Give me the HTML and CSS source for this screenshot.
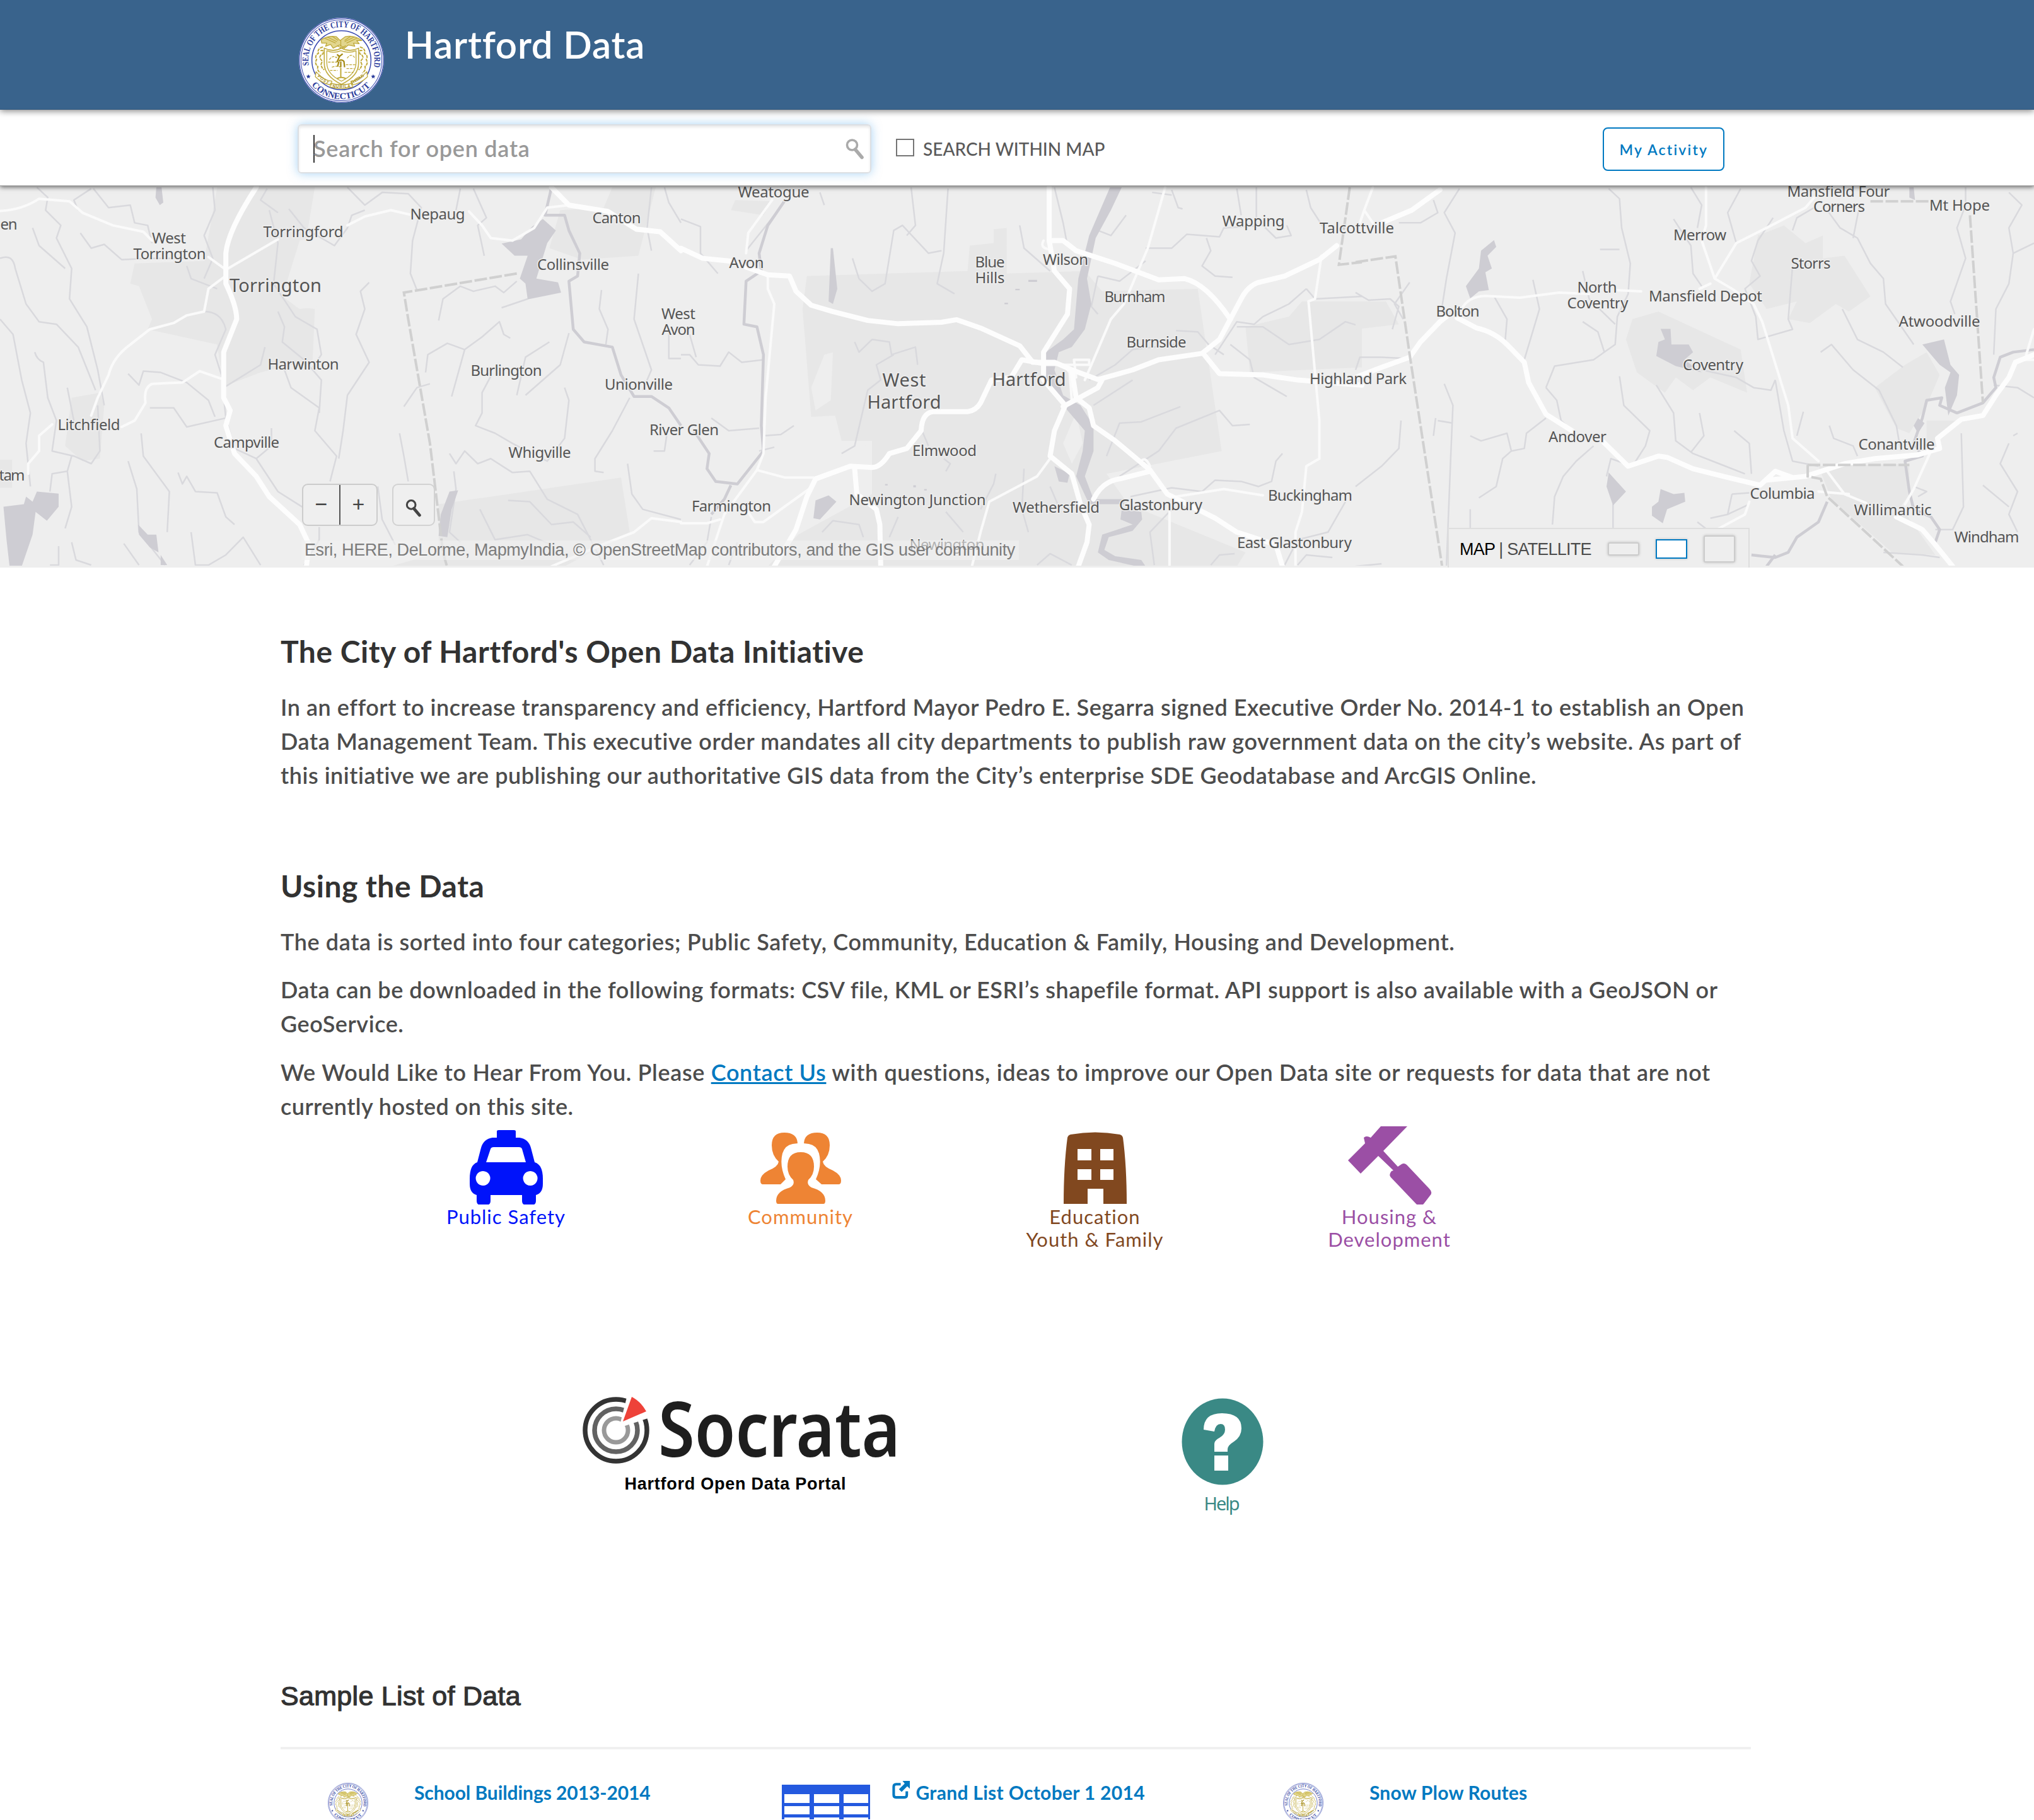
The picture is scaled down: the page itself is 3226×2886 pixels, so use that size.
FILE: index.html
```html
<!DOCTYPE html>
<html lang="en">
<head>
<meta charset="utf-8">
<title>Hartford Data</title>
<link rel="stylesheet" href="styles.css">
</head>
<body>
<svg class="defs" width="0" height="0" aria-hidden="true">
  <defs>
    <path id="arc-top" d="M15.8 76 A52 52 0 1 1 118.2 76"/>
    <path id="arc-bottom" d="M19.5 105.5 A61 61 0 0 0 114.5 105.5"/>
    <symbol id="seal" viewBox="0 0 134 134">
      <circle cx="67" cy="67" r="67" fill="#fff"/>
      <circle cx="67" cy="67" r="66.2" fill="none" stroke="#3a4ab0" stroke-width="1.2"/>
      <circle cx="67" cy="67" r="63.6" fill="none" stroke="#3a4ab0" stroke-width="1"/>
      <circle cx="67" cy="67" r="46.5" fill="none" stroke="#3a4ab0" stroke-width="1.5"/>
      <g fill="#2c3c9c" font-family="Liberation Serif, serif" font-weight="700" font-size="14">
        <text textLength="182" lengthAdjust="spacingAndGlyphs"><textPath href="#arc-top" startOffset="1" textLength="182" lengthAdjust="spacingAndGlyphs">SEAL OF THE CITY OF HARTFORD</textPath></text>
        <text textLength="105" lengthAdjust="spacingAndGlyphs"><textPath href="#arc-bottom" startOffset="1" textLength="105" lengthAdjust="spacingAndGlyphs">CONNECTICUT</textPath></text>
      </g>
      <path fill="#2c3c9c" d="M15 89l1 2.400 2.600.2-2 1.700.6 2.500-2.200-1.400-2.200 1.400.6-2.500-2-1.700 2.600-.2zM117 89l1 2.400 2.600.2-2 1.700.6 2.500-2.200-1.400-2.200 1.400.6-2.500-2-1.700 2.600-.2z"/>
      <g fill="none" stroke="#c0aa3c" stroke-width="1.300" stroke-linejoin="round">
        <path d="M35 35q10-7 24-5l6 6 8-6q14-3 26 6l-8 0 4 5-9-1 2 5-10-2-6 5-8-5-10 5-4-6-8 3 2-5-8 0z" fill="#e2d68e"/>
        <path d="M40 32l18 8M44 30l16 8M92 32l-17 8M88 30l-16 8M52 29l10 7M82 29l-10 7M66 36v10M60 44l12 6M74 44l-12 6"/>
        <path d="M40 48q14 7 27 0 13 7 27 0v24q0 20-27 33-27-13-27-33z" stroke-width="1.600"/>
        <path d="M44 52q11 5 22 0 13 5 24 0v19q0 18-23 29-23-11-23-29z"/>
        <path d="M48 66q6-8 11-3 3-5 7 0M76 64q6-9 12-1M46 70h14M74 74h15M52 78q8-3 14 0M75 80h12M72 86h14M49 83h12" stroke-dasharray="4 1.500"/>
        <path d="M60 70l4-9-4-3M64 61l5-4M63 68q5-3 8 1l1 9M63 69l-2 8M66 69v9" stroke="#a58a14" stroke-width="2.200"/>
        <path d="M66 79v16M60 96q7-4 14 0" stroke-width="2"/>
        <path d="M38 46q-10 3-7 10-7 4-3 10-4 6 2 11-2 6 4 10M34 52q6-2 4 5-7 3-4 8 4 3 1 8 0 6 5 9M96 46q10 3 7 10 7 4 3 10 4 6-2 11 2 6-4 10M100 52q-6-2-4 5 7 3 4 8-4 3-1 8 0 6-5 9" stroke-dasharray="5 1.200" stroke-width="2"/>
        <path d="M27 85q12 14 25 15l-1 6q-14-2-25-13zM107 85q-12 14-25 15l1 6q14-2 25-13zM50 103q17 5 34 0l1 6q-18 5-36 0z" fill="#fff"/>
      </g>
      <g fill="#a8901c" font-family="Liberation Sans, sans-serif" font-weight="700" font-size="6.500">
        <text x="53" y="110" textLength="28">NUBILA</text>
        <text transform="translate(29 93) rotate(36)" textLength="20">POST</text>
        <text transform="translate(84 105) rotate(-34)" textLength="23">PHŒBUS</text>
      </g>
    </symbol>
    <symbol id="loupe" viewBox="0 0 30 34">
      <circle cx="10.500" cy="11" r="8" fill="none" stroke="currentColor" stroke-width="3.600"/>
      <path d="M15.500 18l10.500 12.500" stroke="currentColor" stroke-width="5.600" stroke-linecap="round"/>
    </symbol>
  </defs>
</svg>

<header class="banner">
  <svg class="banner-logo"><use href="#seal"/></svg>
  <h1 class="banner-title">Hartford Data</h1>
</header>

<div class="searchbar">
  <div class="search-box">
    <span class="caret"></span>
    <span class="placeholder">Search for open data</span>
    <svg class="search-icon"><use href="#loupe"/></svg>
  </div>
  <label class="within"><span class="checkbox"></span>SEARCH WITHIN MAP</label>
  <a class="activity">My Activity</a>
</div>

<div class="map">
  <svg class="map-canvas" viewBox="0 0 3226 602">
    <!-- western third -->
    <g transform="translate(0 -14) scale(.6888 .402)">
      <g class="urban">
        <path d="M500 40H725L690 400 680 510 725 520 720 720 600 770 515 825 500 660 340 600 350 560 320 430 300 420 310 340 470 330z"/>
        <path d="M1410 40H1510L1470 310 1340 325 1265 280 1290 130 1390 120z"/>
        <path d="M165 870L230 850 240 900 230 1110 190 1120 150 1060z"/>
        <path d="M0 1115H28V1225H0z"/>
        <path d="M1010 1290L1430 1185 1450 1400 1300 1535H900L1010 1480z"/>
      </g>
      <g class="land"><path d="M690 250L735 230V510L690 520 650 470z"/></g>
      <g class="stream">
        <path d="M85 40L110 80 105 130 140 190 130 240 165 360 160 480 200 590 225 760 240 900"/>
        <path d="M75 200L90 270 150 360"/><path d="M0 320Q30 300 35 360L60 500 90 570 130 580 180 670 220 840"/>
        <path d="M0 560L30 620 50 800 70 930 60 1050 70 1220"/><path d="M80 690Q85 720 100 730L110 870 130 960 120 1080 170 1100 210 1130 230 1080 225 900"/>
        <path d="M210 45L170 90 180 130M215 45L250 120 300 110 310 180 340 190 350 260"/>
        <path d="M185 220L210 280 240 265 280 325 340 320 430 320"/><path d="M490 40L495 130 470 230 490 320 470 400"/>
        <path d="M430 350L440 400 500 440"/><path d="M620 130L640 260 630 420 680 550 730 600 740 700 720 750"/>
        <path d="M665 125L700 200 740 240 770 270 800 200 810 150 840 130"/><path d="M615 45L600 90 640 140"/>
        <path d="M640 530L655 590 650 650 700 720 740 800 735 930"/><path d="M655 760L670 830 735 910 725 1000 775 1100 760 1200"/>
        <path d="M850 415L830 450 840 520 820 620 850 730 800 860 790 1000 780 1110"/>
        <path d="M800 40L840 110 880 60 940 65 970 120 950 250 945 380 960 445"/>
        <path d="M1060 45L1050 130M1090 45L1120 160 1100 190 1115 310"/><path d="M610 670L600 740 520 825"/>
        <path d="M470 530Q510 530 520 600L495 700 510 780 520 950 430 985 400 910 345 910"/>
        <path d="M295 775L320 820 330 765 370 770 430 810 480 880 495 945"/>
        <path d="M520 950L540 1070 590 1110 640 1240 700 1305"/><path d="M590 1110L625 1060V990"/>
        <path d="M155 830L170 960M325 1010L330 1100 390 1240 385 1400"/><path d="M295 1120L315 1230 320 1400 380 1530"/>
        <path d="M410 1165L420 1210 430 1180 450 1240 500 1245 520 1340 540 1370"/><path d="M165 1100L155 1160 120 1170 115 1240M155 1160L165 1300 150 1385"/>
        <path d="M135 1455V1530H115M165 1440L175 1510 210 1530M285 1445L320 1530M440 1400L450 1530 480 1530 520 1490 560 1420 600 1530"/>
        <path d="M735 1380V1430L700 1530M870 1220L880 1350 910 1450M920 1010L930 1100 940 1200M930 905L960 830 990 815"/>
        <path d="M1010 565L1020 480 1060 430 1090 450 1140 430 1160 455 1190 410M1155 515L1215 480"/>
        <path d="M980 770L985 700 1030 655 1070 680 1110 630 1150 570 1160 620 1175 635M1070 680L1040 865"/>
        <path d="M1310 615L1290 740 1210 860M1265 650L1210 710 1190 860"/><path d="M1130 785L1110 850 1110 930 1095 980 1140 1010 1180 1050 1260 1120 1300 1030 1310 880 1300 830"/>
        <path d="M1035 1090L1050 1130 1070 1080 1100 1130 1130 1110 1180 1165 1220 1160 1260 1270 1330 1330 1390 1530"/>
        <path d="M1170 1275L1220 1280 1270 1370 1320 1360 1360 1420M1105 1310L1140 1430 1215 1410 1270 1450"/>
        <path d="M1385 445L1380 520 1400 600 1395 660M1470 380L1460 560 1500 760 1480 840"/><path d="M1500 40L1490 200 1500 290M1530 40L1540 100 1568 180"/>
        <path d="M1450 870L1410 1000 1370 1110 1370 1160 1390 1165M1445 1130L1455 1250 1480 1310 1568 1350"/><path d="M1540 600V715H1568M1535 1020L1530 1080 1505 1080M1045 1160L1050 1230 1035 1400 1060 1440"/>
      </g>
      <g class="river">
        <path d="M1270 40L1255 150 1300 150 1310 210 1335 300 1330 390 1310 410 1320 600 1345 650 1410 670 1430 780 1460 865 1500 865 1540 910 1568 980"/>
      </g>
      <g class="water">
        <path d="M360 40H372L376 100 368 110 358 80zM1250 165L1280 210 1260 260 1235 400 1285 415 1292 455 1215 482 1210 420 1197 400 1215 310 1185 310 1155 262 1200 245 1225 195z"/>
        <path d="M85 1240L135 1248 135 1300 108 1355 82 1320 75 1410 50 1535H22L15 1430 8 1300 55 1290 60 1260 75 1280z"/>
        <path d="M318 1370L340 1410 360 1410 365 1480 345 1460 320 1410zM370 1490L385 1530H370zM1035 1240L1055 1235 1040 1310 1030 1420 1010 1415 1015 1330z"/>
      </g>
      <g class="road-thin">
        <path d="M0 133Q50 130 90 85L160 95 190 140 260 190 330 215 350 250"/><path d="M480 315L520 365 640 245"/>
        <path d="M515 395L480 440 470 530 430 545 400 575 345 600 300 660Q260 710 250 780L225 870 210 940"/>
        <path d="M510 795L460 765 420 810 350 815Q330 830 335 890L310 960 280 985"/><path d="M120 975L90 1020V1080L65 1130V1170"/>
        <path d="M800 190L840 155 900 130 950 150M1080 135L1110 190 1130 240 1180 250 1230 200 1260 120 1310 110 1390 130"/>
        <path d="M1270 1535L1400 1440 1460 1400 1500 1345 1568 1360"/>
      </g>
      <g class="road">
        <path d="M590 40Q525 210 520 300V420Q545 510 545 560L515 690V870L530 920 520 980 540 1090 590 1180 620 1260 690 1370 712 1450 705 1540"/>
        <path d="M1270 40L1310 110 1400 135 1465 205 1520 215 1568 290"/>
      </g>
      <path class="border" d="M1190 380L930 455 940 560 990 1050 1020 1480 1030 1540"/>
    </g>
    <!-- central third -->
    <g transform="translate(1080 -14) scale(.6888 .402)">
      <g class="urban">
        <path d="M290 390L660 370 665 270 720 260V205L750 200V380L930 370 970 450 1190 440 1245 1080 980 1170 1030 1290 1300 1480 1280 1535H200L270 1410 440 1250V1040L370 1040 355 940 300 945 280 520z"/>
        <path d="M125 90L210 95 190 150 115 130zM1300 590L1400 550 1430 490H1568V750L1310 770z"/>
      </g>
      <g class="land"><path d="M330 700L350 690 345 880 310 920 300 830zM370 1100L435 1050V1240L330 1270zM910 930L925 1050 900 1130 880 1050z"/></g>
      <g class="stream">
        <path d="M0 165L45 195V300L85 380M240 90L220 140 150 290M320 60L330 110M530 40L540 190 520 230M615 45L605 300 590 420 630 460"/>
        <path d="M395 320L410 400 440 450 470 420 490 210 510 190 570 300 600 290M780 190L790 280 850 370"/>
        <path d="M400 650L410 690 440 640 480 650 485 700 540 670 545 740M490 700L450 740 460 800 430 840 415 950 400 1060 370 1090"/>
        <path d="M0 700H20L40 740 90 745 110 690 140 730 190 720M20 620L35 710M70 950L110 1000 180 990M190 1020L230 1015 260 980M215 1065L180 1080"/>
        <path d="M860 40L880 180 890 270 920 300M1025 150L990 230 960 210M1130 50L1145 120 1155 125M1085 60L1130 70"/>
        <path d="M1070 280L1130 280 1165 225 1240 235 1250 200 1340 190 1370 240 1405 230 1395 190M1210 240L1220 290 1200 350 1230 390 1270 395"/>
        <path d="M960 390L1010 410 1070 330M960 390L945 510 960 540M1440 440L1400 500 1340 550 1320 580 1280 570 1230 700M1440 440L1460 480 1568 470"/>
        <path d="M1280 590L1340 590 1400 660 1470 640 1530 570 1568 590M1140 605L1190 610 1215 660 1250 700M940 800L1000 740 1040 680 1140 660M1265 660L1310 720 1320 790 1395 865"/>
        <path d="M980 1100L1010 970 1060 965 1150 905M1010 1180L1100 1080 1140 990 1240 920 1270 980 1310 975M1040 800L950 900M1280 45L1290 150M1440 50L1450 120 1480 200M1325 40V190"/>
        <path d="M555 1000L570 1060M725 1170L720 1210 690 1310M790 1150L785 1310 800 1400M850 1220L870 1300M325 1400L350 1355 410 1370 420 1420M605 1110L620 1130 610 1160M610 1320L650 1400M500 1340L480 1420"/>
        <path d="M1035 1260L1130 1225 1200 1240 1230 1195 1290 1200 1330 1220 1360 1200 1370 1120 1385 1090M1530 1280L1490 1400 1420 1430 1390 1530M1130 1310L1080 1400 1090 1530M1220 1530L1240 1490 1275 1485M820 1530L850 1485 900 1530M130 1440L110 1530M70 1340L60 1440 20 1530M1500 1500L1440 1490 1420 1530"/>
      </g>
      <g class="river">
        <path d="M240 90L200 190 180 300 185 370 150 410 145 580 175 590 190 700 185 980 190 1080 130 1210 80 1200 60 1150 65 1090 30 1000"/>
        <path d="M115 1215L100 1270 70 1330"/>
      </g>
      <g class="water">
        <path d="M988 40H1015L990 130 955 240 935 400 945 500 930 600 900 670 870 690 860 760 880 860 920 900 950 980V1080L930 1180 950 1270H1020V1290H940L910 1180 925 1080 930 1000 890 920 840 800V690L880 640 905 600 915 400 940 230z"/>
        <path d="M345 280H350L360 440 350 500 340 490zM340 1255L358 1280 320 1350 305 1345 310 1275zM860 1140L895 1170 890 1205 870 1200zM1015 1310L1060 1320 1062 1350 1040 1395 985 1420 975 1470 1000 1495 1060 1510 1070 1535H1050L985 1510 960 1480 970 1410 1040 1370 1012 1350zM470 1210h6v6h-6zM535 1215h6v8h-6zM770 440h10v6h-10zM800 405h20v8h-20zM560 1230h6v6h-6zM745 495h8v6h-8z"/>
      </g>
      <g class="road-thin">
        <path d="M210 90L155 220 150 300M200 390V440L215 500 195 870 190 1090 175 1155 100 1330 60 1535"/>
        <path d="M1115 40L1075 280 1050 380 1020 500 990 560 950 720 930 800M1475 310L1460 480 1445 490 1470 960V1110L1440 1140 1430 1320 1415 1400V1535"/>
        <path d="M175 1155L240 1185H305M150 1310L170 1360H190L295 1230M0 1365H60L90 1350M905 720H940V740H840M905 720L910 790M1140 1260L1250 1230 1340 1255M1125 1320V1535"/>
        <path d="M850 1110L820 1180 710 1280 690 1400 670 1535M900 880L895 770 880 740M835 250Q825 280 850 285M1060 1120Q1070 1100 1080 1140"/>
      </g>
      <g class="road">
        <path d="M0 280L50 320 110 330 200 385 250 390 265 450 300 505 350 530 430 565 500 578 600 572 635 562 690 595 780 665 810 730H860L900 760 960 798 1040 760 1100 720 1200 695 1240 640 1265 560 1290 480Q1305 430 1330 415L1390 390 1470 325 1510 270"/>
        <path d="M848 40V250H880L910 290 1000 340 1100 405 1160 400Q1210 420 1265 560M1205 700L1240 775 1340 780 1420 800 1568 820"/>
        <path d="M848 250L860 370 895 440 890 540 835 690V800L885 900 860 1000 850 1100 900 1170 920 1290 940 1370 935 1440 915 1535"/>
        <path d="M835 735L785 720 760 790 715 800 690 890Q680 920 660 925H580Q555 930 553 1000L520 1070 480 1090Q460 1145 440 1145L390 1140 310 1190 290 1260 265 1390 215 1535"/>
        <path d="M900 760L910 870 940 910 950 980 1000 1040 1080 1155 1120 1250 1230 1345 1280 1400 1370 1450 1385 1535M970 798L960 830 880 905M950 1270Q970 1200 1010 1190L1080 1160M400 1150L405 1250 450 1310 458 1370 460 1535"/>
      </g>
      <path class="border" d="M1540 40L1515 345 1568 335"/>
    </g>
    <!-- eastern third -->
    <g transform="translate(2150 -14) scale(.6862 .402)">
      <g class="urban">
        <path d="M930 230L990 190 1040 260 1080 230 1080 320 1130 310 1190 470 1140 530 1110 500 1050 575 1000 560 1020 490 950 520 910 420z"/>
        <path d="M640 560L700 530 890 680 905 850 820 790 780 840 740 790 715 850 650 770 625 640zM1270 740L1320 690 1350 780 1320 900 1280 1010 1250 990 1200 830zM1070 1140L1280 1130V1250L1260 1300 1340 1490 1240 1480 1100 1270zM1320 960H1400L1320 1060z"/>
        <path d="M0 490H70L100 580 0 600z"/>
      </g>
      <g class="stream">
        <path d="M240 45L205 140 230 220 210 400 200 510 210 540M180 90L190 140 150 180 100 180M0 455L30 485 80 480 100 510 85 600M110 560L90 500 125 415M410 405L425 520 390 720"/>
        <path d="M585 45L610 85 615 200 635 340 630 460 605 550 600 660 550 720 460 745 440 830M565 285L610 285M525 370L540 480 600 580M525 570L560 610 575 690M320 470L350 560 345 660"/>
        <path d="M735 165L775 270 780 380 800 430M775 40L800 110 790 200M890 45L860 140 880 260M965 160L930 250 915 330 935 390 900 440 925 550 930 640 1010 600 1000 560 1010 350M1010 210L1020 160 1060 120"/>
        <path d="M1090 130L1120 200 1160 240 1190 340 1220 400 1225 500 1290 660M1165 110L1150 240M1410 40V110L1390 200 1410 320 1375 490 1385 540M1125 520L1160 640 1220 690 1265 750M1075 690L1100 660 1150 760 1210 840 1250 980 1260 1080"/>
        <path d="M1510 60L1540 110 1510 200 1520 300 1510 420 1480 520 1475 700M1568 260L1520 300"/><path d="M0 760L10 710 60 710 120 715"/>
        <path d="M105 960L100 1070 60 1140 0 1220M205 815L225 900 220 1100 210 1535M185 950L180 1020M225 970L190 960M265 1020L290 1040 350 1010 360 1080 340 1110 325 1220 285 1265M360 1080L390 1070 395 1010 440 950"/>
        <path d="M440 830L465 880 475 960 500 1000M550 1060L510 1120 480 1180 460 1260 455 1370M610 785L620 900 680 1000 670 1060 640 1140M695 820L735 930 740 1040 780 1090 840 1130 900 1170M795 930L805 1020 775 1085"/>
        <path d="M640 1140L590 1110 580 1180M595 1290V1390M265 1310V1400M875 1000L910 1050 915 1170M1035 925L1020 1020M1095 980L1105 1030 1150 1060 1160 1100M970 800L960 840 920 830 880 790 800 760M970 800L990 1000 1010 1120 1070 1140"/>
        <path d="M1400 1010L1405 1300 1380 1390 1340 1390M1510 1050L1490 1130 1530 1240 1510 1330 1530 1400M1450 1215L1510 1300M1290 1220L1320 1240 1300 1260M1475 820L1530 830 1568 870M1520 1020L1530 1010M870 1250L860 1330 820 1345M790 1360L820 1400"/>
        <path d="M1220 1480L1310 1490 1350 1500M0 1535L60 1525M860 1330L910 1290M910 1245L870 1250"/>
      </g>
      <g class="river">
        <path d="M1568 680L1520 690 1490 710 1475 790 1480 830 1450 890 1390 930 1350 900 1355 870 1320 880 1310 950 1290 1050 1310 1100 1270 1120 1280 1240 1290 1310 1330 1340 1350 1390 1340 1440"/>
        <path d="M1090 1280L1070 1360 1020 1420 1000 1480 970 1500 915 1490M970 1490L950 1535"/>
      </g>
      <g class="water">
        <path d="M320 248L325 275 305 310 315 360 300 375 308 445 285 450 265 478 255 430 285 360 290 290zM705 598H728L730 660 770 660 780 690 760 720 780 745 800 770 740 745 695 705 700 650 715 640z"/>
        <path d="M585 1165L625 1240 595 1295 580 1220zM705 1230L735 1250 760 1245 762 1280 720 1310 710 1365 685 1335 685 1300 700 1280zM1310 660L1360 640 1375 740 1395 780 1390 860 1370 940 1362 830 1375 770 1350 740zM1280 40H1290L1293 90 1280 80zM1300 950L1315 970 1300 1010 1290 980z"/>
      </g>
      <g class="road-thin">
        <path d="M40 40L20 130 10 180M20 130L40 180M245 520Q260 470 300 468L380 475 470 455 540 460M600 445L660 450"/>
        <path d="M810 40V190L800 250 830 400 870 440 920 500 940 570 1000 900 1010 1030 1070 1120M830 400L880 260 950 200 1040 120 1060 80M820 420L795 440"/>
        <path d="M1070 1240L1140 1250M1090 1160L1130 1250 1180 1285M910 1280L900 1330 835 1390M1330 1080L1290 1230 1270 1290M1545 720H1568M1550 700L1568 600"/>
      </g>
      <g class="road">
        <path d="M0 790L60 750 125 710 150 650 195 570 210 550M195 50L130 130 60 180M235 555L280 595Q320 610 350 660L390 730 400 810 440 935 500 1000M570 1040L630 1140 700 1100 720 1105 780 1150 850 1180 935 1215 970 1160 1010 1185M950 1195L1040 1180 1130 1130 1200 1110 1300 1095 1350 1070 1345 1030 1400 955 1450 940 1480 860 1510 790 1525 730 1568 700M1250 1340L1310 1390 1340 1450 1380 1535"/>
      </g>
      <path class="border" d="M0 335L92 312 125 700 200 1535M1190 95H1330M1420 150L1450 890M1045 1135H1280M1045 1135V1180L1075 1190 1090 1260 1265 1535"/>
    </g>

    <g class="labels" transform="translate(0 -293)">
      <text x="14" y="362" textLength="27">en</text><text x="19" y="760" textLength="41">tam</text>
      <text x="268" y="384" textLength="54">West</text><text x="269" y="409" textLength="115">Torrington</text>
      <text x="481" y="374" textLength="127">Torringford</text><text x="694" y="346" textLength="87">Nepaug</text>
      <text x="978" y="352" textLength="77">Canton</text><text x="909" y="426" textLength="114">Collinsville</text>
      <text x="1076" y="504" textLength="54">West</text><text x="1076" y="529" textLength="53">Avon</text>
      <text x="481" y="584" textLength="113">Harwinton</text><text x="803" y="594" textLength="113">Burlington</text>
      <text x="1013" y="616" textLength="108">Unionville</text><text x="1085" y="688" textLength="110">River Glen</text>
      <text x="141" y="680" textLength="99">Litchfield</text><text x="391" y="708" textLength="104">Campville</text>
      <text x="856" y="724" textLength="99">Whigville</text><text x="1227" y="311" textLength="113">Weatogue</text>
      <text x="1184" y="423" textLength="55">Avon</text><text x="1570" y="422" textLength="47">Blue</text>
      <text x="1570" y="447" textLength="47">Hills</text><text x="1690" y="418" textLength="72">Wilson</text>
      <text x="1988" y="357" textLength="99">Wapping</text><text x="2152" y="368" textLength="118">Talcottville</text>
      <text x="1800" y="477" textLength="97">Burnham</text><text x="1834" y="549" textLength="95">Burnside</text>
      <text x="2154" y="607" textLength="154">Highland Park</text><text x="1498" y="721" textLength="102">Elmwood</text>
      <text x="1455" y="799" textLength="217">Newington Junction</text><text x="1160" y="809" textLength="126">Farmington</text>
      <text x="1675" y="811" textLength="138">Wethersfield</text><text x="1841" y="807" textLength="132">Glastonbury</text>
      <text x="2078" y="792" textLength="134">Buckingham</text><text x="2053" y="867" textLength="182">East Glastonbury</text>
      <text x="1502" y="870" textLength="119">Newington</text><text x="2916" y="310" textLength="163">Mansfield Four</text>
      <text x="2917" y="334" textLength="82">Corners</text><text x="3108" y="332" textLength="96">Mt Hope</text>
      <text x="2696" y="379" textLength="84">Merrow</text><text x="2872" y="424" textLength="63">Storrs</text>
      <text x="2533" y="462" textLength="63">North</text><text x="2534" y="487" textLength="97">Coventry</text>
      <text x="2705" y="476" textLength="180">Mansfield Depot</text><text x="2312" y="500" textLength="69">Bolton</text>
      <text x="3076" y="516" textLength="129">Atwoodville</text><text x="2717" y="585" textLength="96">Coventry</text>
      <text x="2502" y="699" textLength="92">Andover</text><text x="3008" y="711" textLength="121">Conantville</text>
      <text x="2827" y="789" textLength="103">Columbia</text><text x="3002" y="815" textLength="123">Willimantic</text>
      <text x="3151" y="858" textLength="103">Windham</text>
      <g class="city">
        <text x="437" y="461" textLength="146">Torrington</text><text x="1434" y="611" textLength="69">West</text>
        <text x="1434" y="646" textLength="117">Hartford</text><text x="1632" y="610" textLength="117">Hartford</text>
      </g>
    </g>
  </svg>
  <div class="zoom"><span>−</span><span>+</span></div>
  <div class="map-search"><svg><use href="#loupe"/></svg></div>
  <div class="attribution">Esri, HERE, DeLorme, MapmyIndia, © OpenStreetMap contributors, and the GIS user community</div>
  <div class="basemap">
    <span class="basemap-names"><b>MAP</b> | SATELLITE</span>
    <i class="size size-s"></i><i class="size size-m"></i><i class="size size-l"></i>
  </div>
</div>

<main class="content">
  <h2>The City of Hartford's Open Data Initiative</h2>
  <p class="tight">In an effort to increase transparency and efficiency, Hartford Mayor Pedro E. Segarra signed Executive Order No. 2014-1 to establish an Open<br><span class="loose">Data Management Team. This executive order mandates all city departments to publish raw government data on the city’s website. As part of</span><br>this initiative we are publishing our authoritative GIS data from the City’s enterprise SDE Geodatabase and ArcGIS Online.</p>

  <h2 class="using">Using the Data</h2>
  <p>The data is sorted into four categories; Public Safety, Community, Education &amp; Family, Housing and Development.</p>
  <p class="tight">Data can be downloaded in the following formats: CSV file, KML or ESRI’s shapefile format. API support is also available with a GeoJSON or<br>GeoService.</p>
  <p class="contact"><span class="loose">We Would Like to Hear From You. Please <a>Contact Us</a> with questions, ideas to improve our Open Data site or requests for data that are not</span><br>currently hosted on this site.</p>

  <div class="categories">
    <a class="cat safety">
      <svg viewBox="0 0 118 124"><path fill-rule="evenodd" d="M44 8q0-2 3-2h24q3 0 3 2v10h6q14 2 18 16l6 23q13 4 13 26v8q0 15-11 18v9q0 7-7 7h-8q-7 0-7-7v-9H34v9q0 7-7 7h-8q-7 0-7-7v-9Q1 106 1 91v-8q0-22 12-26l6-23q4-14 18-16h7zM39 33q-4 0-5 3l-7 21h63l-6-21q-1-3-5-3zM22 71a11.500 11.500 0 1 0 .1 0zM97 71a11.500 11.500 0 1 0 .1 0z"/></svg>
      <span>Public Safety</span>
    </a>
    <a class="cat community">
      <svg viewBox="0 0 132 124"><path d="M40 10q-20 0-20 20 0 16 11 26-1 8-16 14Q2 77 2 86q0 6 4 6h28l8-8Q32 62 37 43q4-13 16-15l8-1Q60 10 40 10zM92 10q20 0 20 20 0 16-11 26 1 8 16 14 13 7 13 16 0 6-4 6H99l-9-8q10-22 5-41-4-13-16-15l-8-1Q72 10 92 10z"/><path d="M66 41q21 0 21 23 0 13-9 21-3 8 5 12 22 6 22 21 0 5-3 5H30q-3 0-3-5 0-15 22-21 8-4 5-12-9-8-9-21 0-23 21-23z"/></svg>
      <span>Community</span>
    </a>
    <a class="cat education">
      <svg viewBox="0 0 102 124"><path fill-rule="evenodd" d="M1 123q0-60 6-105 1-4 5-5 39-7 78 0 4 1 5 5 6 45 6 105H64V99H39v24zM23 36v18h22V36zM59 36v18h21V36zM23 68v17h22V68zM59 68v17h21V68z"/></svg>
      <span>Education<br>Youth &amp; Family</span>
    </a>
    <a class="cat housing">
      <svg viewBox="0 0 134 124"><path d="M53 0H95L57 39l23 25 6-4q5-3 10 3l34 36q6 6 1 11l-10 13q-6 6-12 0L69 81q-4-4 1-10l3-1-24-23-28 28L1 54l27-27-2-9q4-4 11 0z"/></svg>
      <span>Housing &amp;<br>Development</span>
    </a>
  </div>

  <div class="portals">
    <svg class="socrata" viewBox="0 0 504 160">
      <g fill="none">
        <circle cx="54" cy="58" r="49" stroke="#333" stroke-width="7.500"/>
        <circle cx="54" cy="58" r="34" stroke="#626262" stroke-width="7.500"/>
        <circle cx="54" cy="58" r="19" stroke="#999" stroke-width="7"/>
      </g>
      <path fill="#fff" d="M59 54L73-2 114 36z"/>
      <path fill="#ee4239" d="M65 44L79 5Q93 12 102 28z"/>
      <text class="socrata-name" x="121" y="100" textLength="384" lengthAdjust="spacingAndGlyphs">Socrata</text>
      <text class="socrata-sub" x="67.500" y="151.500" textLength="351">Hartford Open Data Portal</text>
    </svg>
    <svg class="help" viewBox="0 0 130 200">
      <ellipse cx="65" cy="76" rx="64.500" ry="68.500" fill="#3a8985"/>
      <path fill="#fff" d="M35 57Q35 31 64 31q31 0 31 24 0 13-12 21-10 6-10 12v4H52V80q0-6 8-10 9-5 9-13 0-9-7-9-8 0-10 12zM52 98h22v24H52z"/>
      <text class="help-text" x="64" y="185" textLength="57">Help</text>
    </svg>
  </div>

  <h3>Sample List of Data</h3>
  <div class="datasets">
    <div class="dataset school"><div class="thumb"><svg class="thumb-seal"><use href="#seal"/></svg></div><a>School Buildings 2013-2014</a></div>
    <div class="dataset grand"><div class="thumb"><svg class="thumb-table" viewBox="0 0 140 100"><path fill="#2459df" d="M0 0h140v100H0z"/><path fill="#fff" d="M4 15h40v14H4zM51 15h40v14H51zM98 15h39v14H98zM4 34h40v13H4zM51 34h40v13H51zM98 34h39v13H98zM4 52h40v14H4zM51 52h40v14H51zM98 52h39v14H98zM4 71h40v13H4zM51 71h40v13H51zM98 71h39v13H98z"/></svg></div><a><svg class="ext" viewBox="0 0 30 30"><path fill="none" stroke="#0079c1" stroke-width="4.200" d="M14 5.500H6.500Q2.500 5.500 2.500 9.500V23q0 4 4 4H20q4 0 4-4V17"/><path fill="#0079c1" d="M17 0h12v13l-4.200-4.300-9.300 9.300-4.400-4.400 9.500-9.300z"/></svg>Grand List October 1 2014</a></div>
    <div class="dataset"><div class="thumb"><svg class="thumb-seal"><use href="#seal"/></svg></div><a>Snow Plow Routes</a></div>
  </div>
</main>
</body>
</html>
```
FILE: styles.css
```css
* { box-sizing: border-box; }
html, body { margin: 0; }
body { width: 3226px; height: 2886px; overflow: hidden; background: #fff; color: #4c4c4c; font-family: Lato, sans-serif; }
.defs { position: absolute; }
svg { display: block; }

.banner { display: flex; height: 174px; padding: 28px 0 0 474px; background: #39638c; border-bottom: 1px solid #30567b; position: relative; box-shadow: 0 2px 10px rgba(0,0,0,.5); z-index: 2; }
.banner-logo { width: 135px; height: 135px; }
.banner-title { margin: 6px 0 0 33px; font-size: 60px; line-height: 72px; font-weight: 600; letter-spacing: .8px; color: #fff; font-variant-ligatures: none; }

.searchbar { display: flex; align-items: flex-start; height: 121px; padding: 23px 0 0 472px; background: #fff; position: relative; z-index: 1; box-shadow: 0 2px 7px rgba(0,0,0,.55); border-bottom: 1px solid #999; }
.search-box { display: flex; align-items: center; width: 910px; height: 78px; padding: 0 9px 0 23px; border: 2px solid #dcdfe3; border-radius: 6px; box-shadow: 0 0 16px rgba(82,168,236,.5), inset 0 3px 4px rgba(0,0,0,.09); }
.caret { width: 2px; height: 44px; background: #333; }
.placeholder { flex: 1; margin: -2px 0 0 -2px; font-size: 36px; font-weight: 600; letter-spacing: .75px; color: #999; }
.search-icon { width: 30px; height: 34px; color: #aaa; }
.within { display: flex; align-items: center; height: 78px; margin-left: 39px; font-size: 28px; font-weight: 500; color: #5a5a5a; white-space: nowrap; }
.checkbox { width: 29px; height: 28px; margin: -4px 14px 0 0; border: 2px solid #757575; background: #fff; }
.activity { width: 193px; height: 69px; margin: 5px 0 0 790px; border: 2px solid #0079c1; border-radius: 8px; font-size: 23px; line-height: 67px; font-weight: 600; letter-spacing: 2.200px; text-align: center; color: #0079c1; }

.map { position: relative; height: 605px; background: #eee; overflow: hidden; }
.map-canvas { width: 3226px; height: 602px; }
.map-canvas path { vector-effect: non-scaling-stroke; }
.urban { fill: #e7e7e7; }
.land { fill: #eee; }
.water { fill: #cecdd3; }
.stream path { fill: none; stroke: #d9d9dd; stroke-width: 2.500; stroke-linejoin: round; }
.river path { fill: none; stroke: #cecdd3; stroke-width: 4.500; stroke-linejoin: round; }
.road path, .road-thin path { fill: none; stroke: #fdfdfd; stroke-width: 8; stroke-linejoin: round; stroke-linecap: round; }
.road-thin path { stroke-width: 4; stroke: #fafafa; }
.border { fill: none; stroke: #d0d0d0; stroke-width: 4; stroke-dasharray: 20 4; }
.labels { font-family: "Noto Sans", "Open Sans", sans-serif; font-size: 24px; fill: #555; text-anchor: middle; paint-order: stroke; stroke: #eee; stroke-width: 3px; }
.city { font-size: 29px; }
.zoom { position: absolute; left: 479px; top: 472px; display: flex; width: 120px; height: 67px; border: 2px solid #ccc; border-radius: 9px; background: #efefef; color: #444; font: 34px/60px "Liberation Sans", sans-serif; text-align: center; }
.zoom span { flex: 1; }
.zoom span + span { border-left: 2px solid #555; }
.map-search { position: absolute; left: 622px; top: 472px; display: flex; align-items: center; justify-content: center; width: 68px; height: 67px; padding: 10px 0 0 0; border: 2px solid #d2d2d2; border-radius: 9px; background: #efefef; color: #444; }
.map-search svg { width: 26px; height: 29px; }
.attribution { position: absolute; left: 478px; top: 562px; width: 1138px; height: 31px; padding-left: 5px; background: rgba(242,242,242,.6); font: 27px/31px "Liberation Sans", sans-serif; letter-spacing: -.41px; white-space: nowrap; color: #7c7c7c; }
.basemap { position: absolute; left: 2296px; top: 542px; display: flex; align-items: center; width: 479px; height: 64px; padding-left: 17px; border: 2px solid #dedede; border-bottom: 0; background: #eee; font: 27px "Liberation Sans", sans-serif; letter-spacing: -.800px; color: #4c4c4c; }
.basemap-names { width: 235px; padding-top: 2px; white-space: nowrap; }
.basemap b { font-weight: 400; color: #000; }
.size { border: 2px solid #ccc; box-shadow: 0 0 4px rgba(0,0,0,.2); border-radius: 3px; background: #eee; }
.size-s { width: 50px; height: 21px; }
.size-m { width: 50px; height: 31px; margin-left: 26px; border-color: #0079c1; border-radius: 0; background: #fff; }
.size-l { width: 50px; height: 43px; margin-left: 26px; }

.content { width: 2332px; margin-left: 445px; padding-top: 104px; font-variant-ligatures: none; }
h2 { margin: 0 0 32px; font-size: 48px; line-height: 58px; font-weight: 700; letter-spacing: .5px; color: #323232; }
.using { margin-top: 120px; }
p { margin: 0 0 22px; font-size: 36px; line-height: 54px; font-weight: 600; letter-spacing: .6px; white-space: nowrap; }
.tight { letter-spacing: .54px; }
.loose { letter-spacing: .65px; }
.contact { margin-top: 23px; }
.contact { letter-spacing: .45px; }
p a { color: #0079c1; text-decoration: underline; text-decoration-thickness: 3px; }

.categories { display: grid; grid-template-columns: repeat(4, 467px); height: 424px; margin: -17px 0 0 124px; }
.cat { display: flex; flex-direction: column; align-items: center; font-size: 31px; line-height: 36px; letter-spacing: 1px; text-align: center; }
.cat svg { height: 124px; margin-bottom: 1px; fill: currentColor; }
.safety { color: #0013fa; }
.community { color: #ee8434; }
.education { color: #81481f; }
.housing { color: #9b4fa5; }

.portals { display: flex; height: 202px; margin: 0 0 253px 478px; }
.socrata { width: 504px; height: 160px; overflow: visible; }
.socrata-name { font: 600 121px "Noto Sans", sans-serif; fill: #1e1e1e; }
.socrata-sub { font: 700 27px "Liberation Sans", sans-serif; fill: #000; }
.help { width: 130px; height: 200px; margin-left: 447px; }
.help-text { font: 29px "Noto Sans", sans-serif; fill: #3a8985; text-anchor: middle; }

h3 { margin: 0; font: 400 43px/48px "Liberation Sans", sans-serif; letter-spacing: .3px; color: #323232; -webkit-text-stroke: 1.200px #323232; }
.datasets { display: grid; grid-template-columns: repeat(3, 757.500px); margin-top: 57px; padding-top: 50px; border-top: 4px solid #f0f0f0; white-space: nowrap; }
.dataset { display: flex; align-items: flex-start; padding-left: 37px; gap: 35px; font-size: 30px; line-height: 36px; font-weight: 700; letter-spacing: .2px; color: #0079c1; }
.school { letter-spacing: -.080px; }
.grand { letter-spacing: .3px; }
.thumb { display: flex; justify-content: center; width: 140px; height: 61px; overflow: hidden; }
.thumb-seal { width: 64px; height: 64px; margin-top: 3px; flex: none; }
.thumb-table { width: 140px; height: 100px; margin-top: 6px; flex: none; }
.dataset a { display: flex; align-items: flex-start; }
.ext { width: 29px; height: 29px; margin-right: 9px; }
```
